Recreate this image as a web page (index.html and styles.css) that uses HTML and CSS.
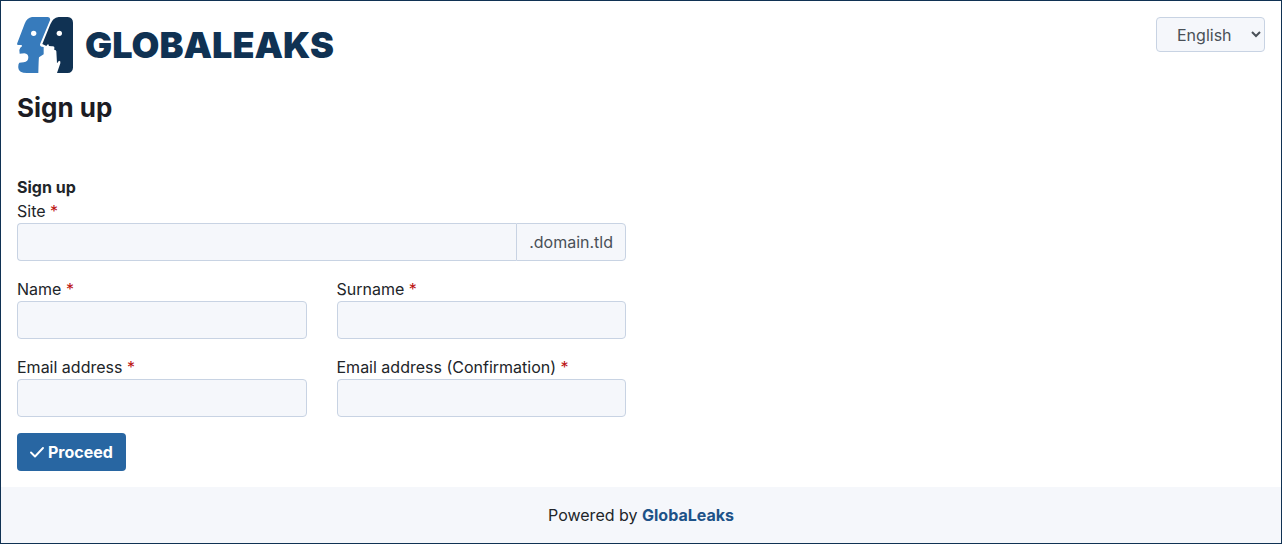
FILE: index.html
```html
<!DOCTYPE html>
<html lang="en">
<head>
<meta charset="utf-8">
<meta name="viewport" content="width=device-width, initial-scale=1">
<title>Sign up - GlobaLeaks</title>
<link rel="stylesheet" href="styles.css">
</head>
<body>
<div class="page">
  <header class="header">
    <div class="brand">
      <svg class="brand-mark" viewBox="0 0 168 168" aria-hidden="true">
        <path fill="#377bbc" d="M45 0H93Q101 1 99 10L69 82Q68 88 74 89L80 90V112L66 121Q65 126 64 168H30Q5 168 4 153Q3 141 7 137L20 136Q34 134 34 121Q34 111 22 109L8 110L7 99Q9 92 15 88L14 84H3Q-1 83 1 78L23 20Q30 2 45 0Z"/>
        <path fill="#103253" d="M125 0H152Q168 2 168 17V152Q167 167 152 168H120L130 139Q132 132 126 131L120 139L118 103Q117 98 112 99V90Q110 87 105 88L96 87L94 82Q91 81 88 87L76 81L100 22Q107 3 125 0Z"/>
        <circle cx="50" cy="49" r="8" fill="#fff"/>
        <circle cx="127" cy="49" r="8" fill="#fff"/>
      </svg>
      <span class="brand-name">GLOBALEAKS</span>
    </div>
    <select class="language" aria-label="Language"><option>English</option></select>
  </header>
  <h1 class="title">Sign up</h1>
  <main class="content">
    <form class="form">
      <h2 class="form-title">Sign up</h2>
      <div class="fields">
        <div class="field field-wide">
          <label for="site">Site <span class="required">*</span></label>
          <div class="input-group">
            <input class="input" id="site" type="text">
            <span class="suffix">.domain.tld</span>
          </div>
        </div>
        <div class="field">
          <label for="name">Name <span class="required">*</span></label>
          <input class="input" id="name" type="text">
        </div>
        <div class="field">
          <label for="surname">Surname <span class="required">*</span></label>
          <input class="input" id="surname" type="text">
        </div>
        <div class="field">
          <label for="email">Email address <span class="required">*</span></label>
          <input class="input" id="email" type="email">
        </div>
        <div class="field">
          <label for="email2">Email address (Confirmation) <span class="required">*</span></label>
          <input class="input" id="email2" type="email">
        </div>
      </div>
      <button class="proceed" type="button">
        <svg class="check" viewBox="0 0 14 16" aria-hidden="true"><path d="M1 8.500 5 12.500 13 4" fill="none" stroke="currentColor" stroke-width="1.900" stroke-linecap="round" stroke-linejoin="round"/></svg>
        Proceed
      </button>
    </form>
  </main>
  <footer class="footer">Powered by <a class="footer-link" href="#">GlobaLeaks</a></footer>
</div>
</body>
</html>
```
FILE: styles.css
```css
* {
  box-sizing: border-box;
}

body {
  margin: 0;
  background: #fff;
  color: #212529;
  font: 16px/24px Inter, "Open Sans", sans-serif;
}

.page {
  display: flex;
  flex-direction: column;
  min-height: 100vh;
  border: 1px solid #103253;
}

.header {
  display: flex;
  align-items: flex-start;
  justify-content: space-between;
  padding: 16px 16px 0;
}

.brand {
  display: flex;
  align-items: center;
  gap: 12px;
}

.brand-mark {
  width: 56px;
  height: 56px;
}

.brand-name {
  color: #103253;
  font-size: 36px;
  font-weight: 900;
  line-height: 54px;
}

.language {
  width: 109px;
  height: 35px;
  padding: 0 0 0 16px;
  border: 1px solid #c8d3e3;
  border-radius: 4px;
  background: #f5f7fb;
  color: #495057;
  font: inherit;
}

.title {
  margin: 16px 16px 0;
  color: #1c1c24;
  font-size: 26px;
  font-weight: 700;
  line-height: 38px;
}

.content {
  flex: 1;
  padding: 48px 16px 16px;
}

.form {
  width: calc(50% - 15px);
}

.form-title {
  margin: 0;
  font-size: 16px;
  font-weight: 700;
  line-height: 24px;
}

.fields {
  display: grid;
  grid-template-columns: 1fr 1fr;
  gap: 16px 30px;
}

.field {
  display: flex;
  flex-direction: column;
  min-width: 0;
}

.field-wide {
  grid-column: 1 / -1;
}

.required {
  color: #bb1111;
}

.input {
  width: 100%;
  min-width: 0;
  height: 38px;
  padding: 6px 12px;
  border: 1px solid #c8d3e3;
  border-radius: 4px;
  background: #f5f7fb;
  color: inherit;
  font: inherit;
}

.input-group {
  display: flex;
}

.input-group .input {
  flex: 1;
  border-right: 0;
  border-radius: 4px 0 0 4px;
}

.suffix {
  padding: 6px 12px;
  border: 1px solid #c8d3e3;
  border-radius: 0 4px 4px 0;
  background: #f5f7fb;
  color: #495057;
}

.proceed {
  display: flex;
  align-items: center;
  gap: 4px;
  height: 38px;
  margin-top: 16px;
  padding: 0 13px;
  border: 0;
  border-radius: 4px;
  background: #2866a2;
  color: #fff;
  font: inherit;
  font-weight: 700;
}

.check {
  width: 14px;
  height: 16px;
}

.footer {
  padding: 16px;
  background: #f5f7fb;
  text-align: center;
}

.footer-link {
  color: #1d5288;
  font-weight: 700;
  text-decoration: none;
}
```
